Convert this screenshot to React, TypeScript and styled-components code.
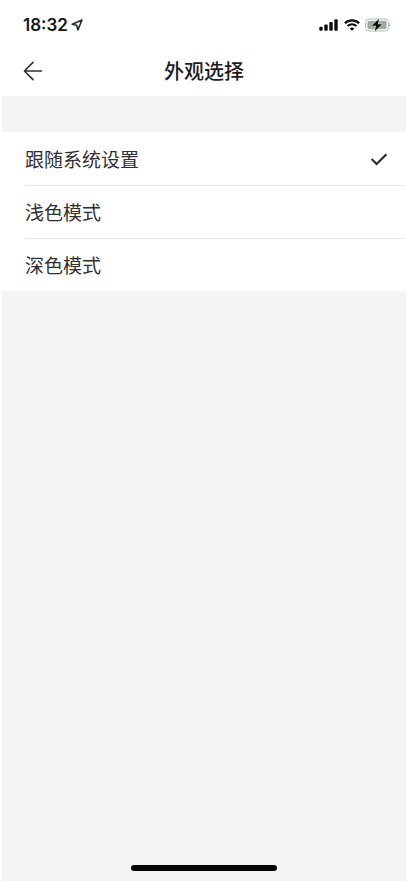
import React, { useState } from "react";
import styled, { createGlobalStyle } from "styled-components";

const GlobalStyle = createGlobalStyle`
  *, *::before, *::after { box-sizing: border-box; }
  body {
    margin: 0;
    background: #ffffff;
    color: #1c1c1c;
    font-family: "Noto Sans CJK SC", sans-serif;
  }
`;

const Screen = styled.div`
  display: flex;
  flex-direction: column;
  min-height: 100vh;
  padding-left: 2px;
`;

const StatusBar = styled.div`
  display: flex;
  align-items: center;
  justify-content: space-between;
  height: 50px;
  padding: 0 15px 0 21px;
`;

const Cluster = styled.div<{ $gap: number }>`
  display: flex;
  align-items: center;
  gap: ${({ $gap }) => $gap}px;
`;

const Clock = styled.time`
  font-family: Inter, sans-serif;
  font-size: 17px;
  line-height: 20px;
  font-weight: 600;
  color: #161616;
`;

const Header = styled.header`
  display: grid;
  grid-template-columns: 60px 1fr 60px;
  align-items: center;
  height: 46px;
  padding-bottom: 4px;
`;

const BackButton = styled.button`
  display: flex;
  width: 41px;
  padding: 0 0 0 21px;
  border: 0;
  background: none;
  color: #303030;
  cursor: pointer;
`;

const Title = styled.h1`
  margin: 0;
  font-size: 20px;
  line-height: 28px;
  font-weight: 500;
  text-align: center;
`;

const Content = styled.main`
  display: flex;
  flex: 1;
  flex-direction: column;
  padding-top: 36px;
  background: #f4f4f4;
`;

const Options = styled.fieldset`
  min-width: 0;
  margin: 0;
  padding: 0 0 0 23px;
  border: 0;
  background: #ffffff;
`;

const OptionRow = styled.label`
  display: flex;
  align-items: center;
  justify-content: space-between;
  height: 53px;
  padding-right: 18px;
  font-size: 19px;
  line-height: 28px;
  color: #303030;
  cursor: pointer;

  & + & {
    border-top: 1px solid #e6e6e6;
  }
`;

const OptionText = styled.span`
  flex: 1;
`;

const Radio = styled.input`
  appearance: none;
  width: 0;
  height: 0;
  margin: 0;

  & + svg { visibility: hidden; }
  &:checked + svg { visibility: visible; }
`;

const HomeArea = styled.footer`
  display: flex;
  justify-content: center;
  padding: 8px 0 10px;
  background: #f4f4f4;
`;

const HomeIndicator = styled.div`
  width: 36%;
  height: 6px;
  border-radius: 3px;
  background: #050505;
`;

const LocationIcon = () => (
  <svg width="12" height="12" viewBox="0 0 12 12" fill="none" aria-hidden="true">
    <path d="M11 1 L1.2 5.2 L5.6 6.3 L6.9 10.9 Z" stroke="#2b2b2b" strokeWidth="1.6" strokeLinejoin="round" />
  </svg>
);

const SignalIcon = () => (
  <svg width="20" height="12" viewBox="0 0 20 12" fill="#0c0c0c" aria-hidden="true">
    <rect x="0.3" y="7.7" width="3.4" height="4.1" rx="1" />
    <rect x="5.3" y="5.6" width="3.4" height="6.2" rx="1" />
    <rect x="10.3" y="3" width="3.4" height="8.8" rx="1" />
    <rect x="15.3" y="0.3" width="3.4" height="11.5" rx="1" />
  </svg>
);

const WifiIcon = () => (
  <svg width="16" height="12" viewBox="0 0 16 12" fill="none" stroke="#0c0c0c" aria-hidden="true">
    <path d="M0.9 4.3 C4.8 0.4 11.2 0.4 15.1 4.3" strokeWidth="2.3" />
    <path d="M3.6 7.1 C6.1 4.7 9.9 4.7 12.4 7.1" strokeWidth="2.1" />
    <path d="M8 11.7 L5.7 9.4 C7 8.2 9 8.2 10.3 9.4 Z" fill="#0c0c0c" stroke="none" />
  </svg>
);

const BatteryIcon = () => (
  <svg width="26" height="14" viewBox="0 0 26 14" aria-hidden="true">
    <rect x="0.6" y="1" width="22.8" height="12" rx="3.5" fill="none" stroke="#b3bdb3" strokeWidth="1" />
    <rect x="2.4" y="2.8" width="19.2" height="8.4" rx="2" fill="#9dac9e" />
    <path d="M24.4 5 C26 5.5 26 8.5 24.4 9 Z" fill="#a9b0a9" />
    <path d="M14 0.8 L6.9 7.8 H11 L9.8 13.2 L17 6.2 H12.8 Z" fill="#0c0c0c" stroke="#f2f5f2" strokeWidth="0.8" paintOrder="stroke" />
  </svg>
);

const BackIcon = () => (
  <svg width="20" height="20" viewBox="0 0 20 20" fill="none" stroke="currentColor" strokeWidth="1.6" strokeLinecap="round" strokeLinejoin="round" aria-hidden="true">
    <path d="M18.4 10 H1.4 M10 1.4 L1.4 10 L10 18.6" />
  </svg>
);

const CheckIcon = () => (
  <svg width="18" height="14" viewBox="0 0 18 14" fill="none" stroke="#2d2d2d" strokeWidth="2.2" aria-hidden="true">
    <path d="M1.6 6.9 L6.6 12 L16.4 2.2" />
  </svg>
);

const modes = ["跟随系统设置", "浅色模式", "深色模式"];

export default function App() {
  const [selected, setSelected] = useState(modes[0]);

  return (
    <>
      <GlobalStyle />
      <Screen lang="zh-CN">
        <StatusBar>
          <Cluster $gap={3}>
            <Clock>18:32</Clock>
            <LocationIcon />
          </Cluster>
          <Cluster $gap={5}>
            <SignalIcon />
            <WifiIcon />
            <BatteryIcon />
          </Cluster>
        </StatusBar>
        <Header>
          <BackButton type="button" aria-label="返回">
            <BackIcon />
          </BackButton>
          <Title>外观选择</Title>
        </Header>
        <Content>
          <Options aria-label="外观选择">
            {modes.map((mode) => (
              <OptionRow key={mode}>
                <OptionText>{mode}</OptionText>
                <Radio
                  type="radio"
                  name="appearance"
                  value={mode}
                  checked={selected === mode}
                  onChange={() => setSelected(mode)}
                />
                <CheckIcon />
              </OptionRow>
            ))}
          </Options>
        </Content>
        <HomeArea>
          <HomeIndicator />
        </HomeArea>
      </Screen>
    </>
  );
}
